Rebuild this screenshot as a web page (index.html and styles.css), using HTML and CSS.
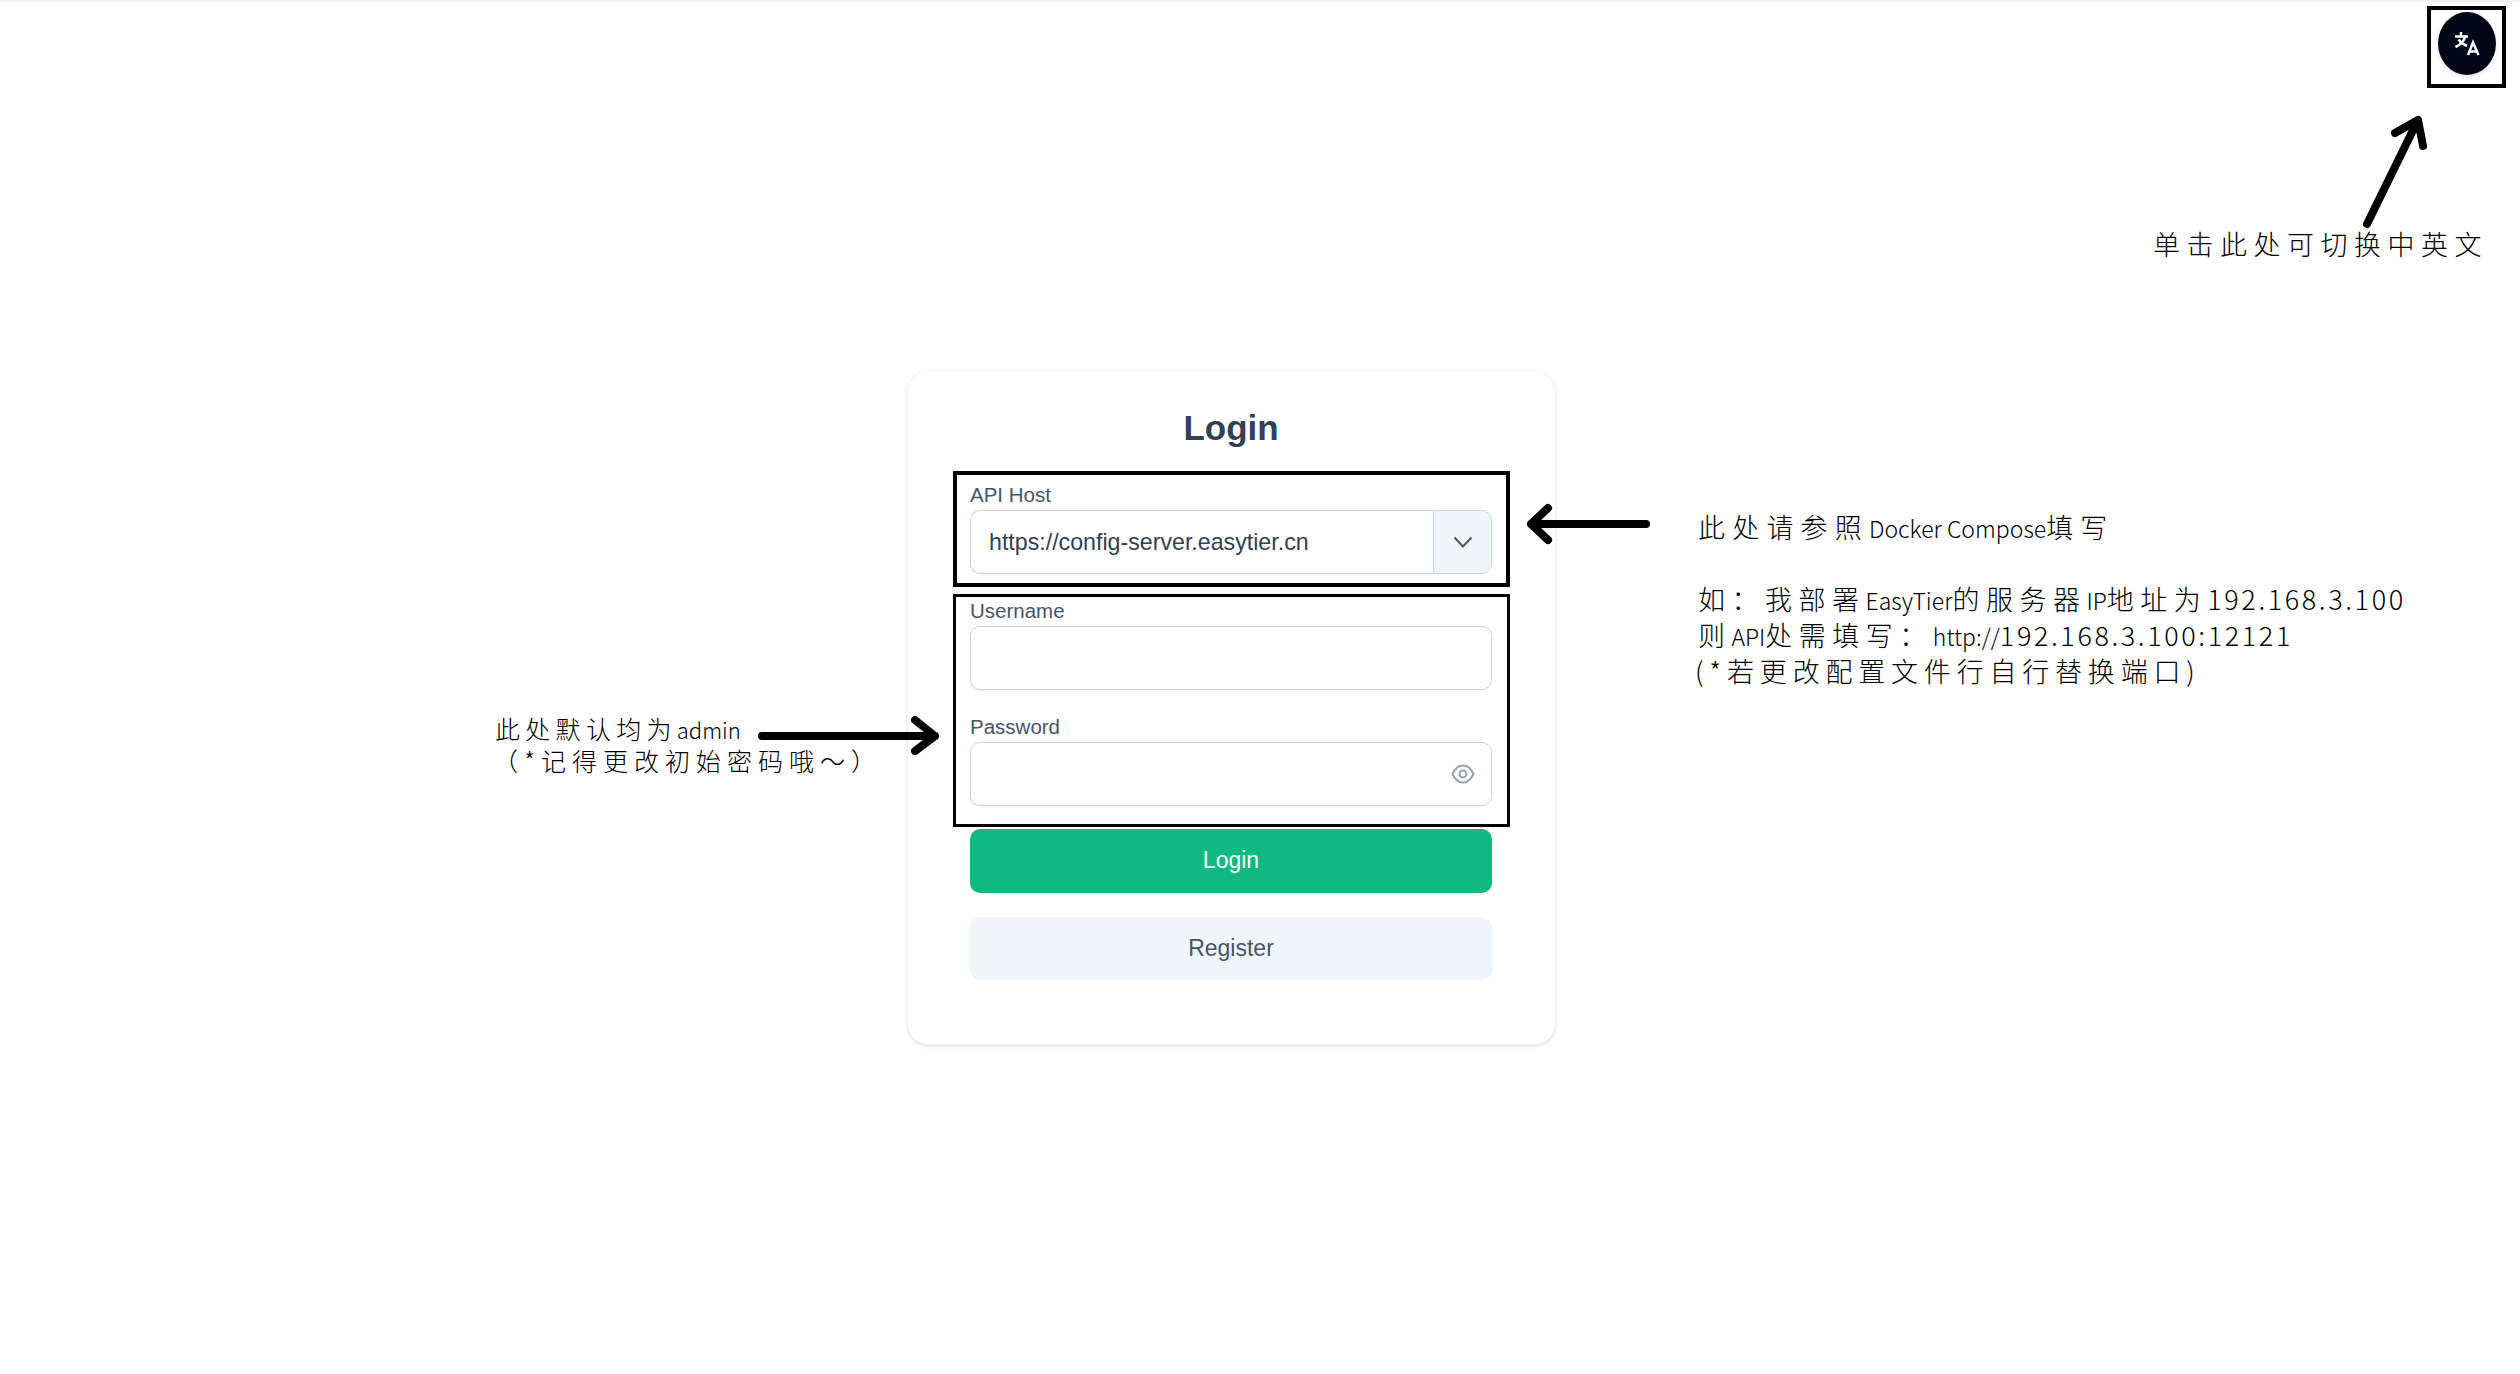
FILE: index.html
```html
<!DOCTYPE html>
<html>
<head>
<meta charset="utf-8">
<title>Login</title>
<link rel="stylesheet" href="styles.css">
</head>

<body>
  <div id="page">
    <div id="card">
      <h1>Login</h1>

      <div class="frame frame_host">
        <label>API Host</label>
        <div class="field_group">
          <input class="field field_joined" value="https://config-server.easytier.cn">
          <div class="addon">
            <svg width="20" height="12" viewBox="0 0 20 12"><path d="M1.5 1.5 10 10.5 18.5 1.5" fill="none" stroke="#475569" stroke-width="2"/></svg>
          </div>
        </div>
      </div>

      <div class="frame frame_login">
        <label>Username</label>
        <input class="field">
        <label class="label_next">Password</label>
        <div class="field_wrap">
          <input class="field" type="password">
          <svg class="eye" width="24" height="22" viewBox="0 0 24 22" fill="none" stroke="#94a3b8" stroke-width="2">
            <path d="M1.5 11C4 5.5 7.5 2.5 12 2.5S20 5.5 22.500 11C20 16.500 16.500 19.500 12 19.500S4 16.500 1.500 11Z"/>
            <circle cx="12" cy="11" r="3.500"/>
          </svg>
        </div>
      </div>

      <div class="btn primary">Login</div>
      <div class="btn secondary">Register</div>
    </div>
  </div>

  <!-- language switch, framed by the annotation box -->
  <div id="lang_frame">
    <div id="lang">
      <svg width="26" height="25" viewBox="0 0 26 25" fill="none" stroke="#fff" stroke-width="2.500">
        <path d="M1 5.500H14"/>
        <path d="M7 1V5.500"/>
        <path d="M11.500 5.500C9.500 10.500 6 14 1.500 16"/>
        <path d="M4.500 8.500C6.500 11.500 9.500 13.500 13 15"/>
        <path d="M14 24 19 11.500 24.500 24"/>
        <path d="M15.500 20.500H23"/>
      </svg>
    </div>
  </div>

  <svg id="arrows" width="2520" height="1374" viewBox="0 0 2520 1374" fill="none" stroke="#000" stroke-width="8" stroke-linecap="round" stroke-linejoin="round">
    <path d="M1646 524H1531M1548 508 1531 524 1548 540"/>
    <path d="M762 736H935M915 720 935 736 915 751"/>
    <path d="M2367 224 2417 122M2395 133 2418 120 2423 146"/>
  </svg>

  <div class="note note_lang">单击此处可切换中英文</div>

  <div class="note note_host">
    <p class="wide">此处请参照<span class="latin">Docker Compose</span>填写</p>
    <p class="gap">如：我部署<span class="latin">EasyTier</span>的服务器<span class="latin">IP</span>地址为<span class="num">192.168.3.100</span></p>
    <p>则<span class="latin">API</span>处需填写：<span class="latin">http://</span><span class="num">192.168.3.100:12121</span></p>
    <p class="shift">(*若更改配置文件行自行替换端口)</p>
  </div>

  <div class="note note_user">
    <p>此处默认均为<span class="latin">admin</span></p>
    <p class="indent">（*记得更改初始密码哦～）</p>
  </div>
</body>
</html>
```

FILE: styles.css
```css
html, body {
  background-color: white;
  margin: 0;
  padding: 0;
  color: #334155;
  font-family: "Liberation Sans", Arial, sans-serif;
}

body {
  width: 2520px;
  height: 1374px;
  position: relative;
  overflow: hidden;
  box-sizing: border-box;
  border-top: 2px solid #f4f4f5;
}

#page {
  padding: 368px 0 0 907px;
}

#card {
  width: 649px;
  height: 675px;
  box-sizing: border-box;
  padding: 37px 63px 0 62px;
  background-color: white;
  border: #f1f5f9 1px solid;
  border-radius: 22px;
  box-shadow: 0 2px 3px 0 rgba(0,0,0,0.1);
}

h1 {
  margin: 0 0 23px;
  height: 40px;
  line-height: 40px;
  font-size: 35px;
  font-weight: bold;
  text-align: center;
  color: #334155;
}

.frame {
  margin: 0 -18px 0 -17px;
  padding: 0 15px 0 14px;
  box-sizing: border-box;
  border: #000 3px solid;
}
.frame_host {
  height: 116px;
  padding: 8px 14px 0 13px;
  border-width: 4px;
}
.frame_login {
  height: 233px;
  margin-top: 7px;
  padding-top: 2px;
}

label {
  display: block;
  height: 24px;
  line-height: 24px;
  margin-bottom: 3px;
  font-size: 20.5px;
  color: #475569;
}
.label_next {
  margin-top: 25px;
}

.field {
  display: block;
  width: 100%;
  height: 64px;
  box-sizing: border-box;
  padding: 0 18px;
  margin: 0;
  border: #cbd5e1 1px solid;
  border-radius: 10px;
  background-color: white;
  box-shadow: 0 1px 2px 0 rgba(0,0,0,0.05);
  font-family: inherit;
  font-size: 23.2px;
  color: #334155;
  outline: none;
}

.field_group {
  display: flex;
}
.field_joined {
  flex: 1;
  min-width: 0;
  border-radius: 10px 0 0 10px;
  border-right: none;
}
.addon {
  width: 59px;
  height: 64px;
  box-sizing: border-box;
  display: flex;
  align-items: center;
  justify-content: center;
  background-color: #f1f5f9;
  border: #cbd5e1 1px solid;
  border-radius: 0 10px 10px 0;
}

.field_wrap {
  position: relative;
}
.eye {
  position: absolute;
  right: 17px;
  top: 21px;
}

.btn {
  height: 64px;
  line-height: 62px;
  border-radius: 10px;
  font-size: 23px;
  text-align: center;
}
.primary {
  margin-top: 2px;
  background-color: #10b981;
  color: white;
}
.secondary {
  height: 63px;
  margin-top: 24px;
  background-color: #f1f5f9;
  color: #475569;
}

#lang_frame {
  position: absolute;
  left: 2427px;
  top: 4px;
  width: 79px;
  height: 82px;
  box-sizing: border-box;
  padding-top: 2px;
  border: #000 4px solid;
  display: flex;
  align-items: flex-start;
  justify-content: center;
}
#lang {
  width: 58px;
  height: 63px;
  border-radius: 50%;
  background-color: #030617;
  box-shadow: 0 2px 6px 0 rgba(0,0,0,0.1);
  display: flex;
  align-items: center;
  justify-content: center;
}

#arrows {
  position: absolute;
  left: 0;
  top: -2px;
}

.note {
  position: absolute;
  color: #000;
  font-family: "Noto Sans CJK SC", "Noto Sans", sans-serif;
  font-weight: 300;
  white-space: nowrap;
}
.note p {
  margin: 0;
  height: 36px;
}
.latin {
  letter-spacing: 0;
}

.note_lang {
  left: 2153px;
  top: 224px;
  font-size: 27px;
  line-height: 36px;
  letter-spacing: 6.5px;
}

.note_host {
  left: 1698px;
  top: 507px;
  font-size: 27px;
  line-height: 36px;
  letter-spacing: 6.5px;
}
.note_host .latin {
  font-size: 23px;
}
.note_host .num {
  font-size: 27px;
  letter-spacing: 2.600px;
}
.note_host .wide {
  letter-spacing: 7.200px;
}
.note_host .gap {
  margin-top: 36px;
}
.note_host .shift {
  margin-left: -3px;
  letter-spacing: 5.800px;
}

.note_user {
  left: 495px;
  top: 710px;
  font-size: 25px;
  line-height: 32px;
  letter-spacing: 5.300px;
}
.note_user p {
  height: 32px;
}
.note_user .latin {
  font-size: 22px;
}
.note_user .indent {
  margin-left: -2px;
  letter-spacing: 6px;
}
```
